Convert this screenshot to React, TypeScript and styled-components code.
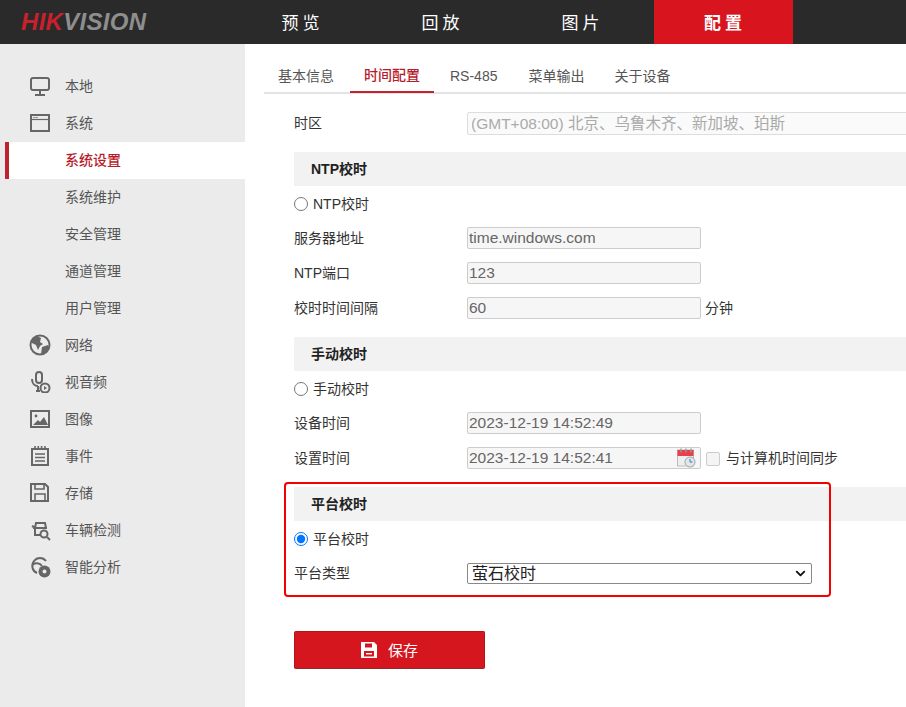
import styled, { createGlobalStyle } from 'styled-components';
import { ChevronDown } from 'lucide-react';

const GlobalStyle = createGlobalStyle`
  html, body {
    margin: 0;
    padding: 0;
    height: 100%;
    overflow: hidden;
    background: #fff;
    font-family: "Liberation Sans", "Noto Sans CJK SC", sans-serif;
  }
`;

const Page = styled.div`
  width: 906px;
  height: 707px;
  display: flex;
  flex-direction: column;
  overflow: hidden;
`;

const Header = styled.header`
  height: 44px;
  flex: none;
  display: flex;
  background: #2a2a2a;
`;

const Logo = styled.div`
  width: 231px;
  box-sizing: border-box;
  padding: 7px 0 0 21px;
  font-size: 24px;
  line-height: 30px;
  font-weight: 700;
  font-style: italic;
  letter-spacing: 0.3px;
  color: #8e8e8e;

  b {
    color: #c8202c;
  }
`;

const NavItem = styled.div<{ $active?: boolean }>`
  width: ${(p) => (p.$active ? '139px' : '140px')};
  margin-left: ${(p) => (p.$active ? '3px' : '0')};
  display: flex;
  align-items: center;
  justify-content: center;
  padding: 0 0 2px 3px;
  box-sizing: border-box;
  font-size: 17px;
  letter-spacing: 4px;
  color: #fff;
  font-weight: ${(p) => (p.$active ? 700 : 400)};
  background: ${(p) => (p.$active ? '#d8141e' : 'transparent')};
`;

const Body = styled.div`
  flex: 1;
  display: flex;
  min-height: 0;
`;

const Sidebar = styled.aside`
  width: 245px;
  flex: none;
  box-sizing: border-box;
  padding-top: 24px;
  background: #ebebeb;
`;

const MenuRow = styled.div<{ $selected?: boolean }>`
  height: 37px;
  display: flex;
  align-items: center;
  box-sizing: border-box;
  margin-left: ${(p) => (p.$selected ? '5px' : '0')};
  padding: 0 0 3px ${(p) => (p.$selected ? '56px' : '65px')};
  position: relative;
  font-size: 14px;
  color: ${(p) => (p.$selected ? '#b81c2c' : '#555')};
  font-weight: ${(p) => (p.$selected ? 500 : 400)};
  background: ${(p) => (p.$selected ? '#fff' : 'transparent')};
  border-left: ${(p) => (p.$selected ? '4px solid #c0202f' : 'none')};
`;

const MenuIcon = styled.svg`
  position: absolute;
  left: 29px;
  top: 7px;
  width: 22px;
  height: 22px;
  fill: none;
  stroke: #666;
  stroke-width: 2;
`;

const Main = styled.main`
  flex: 1;
  min-width: 0;
  margin-left: 19px;
`;

const Tabs = styled.nav`
  height: 48px;
  display: flex;
  align-items: flex-end;
  padding-left: 14px;
  border-bottom: 2px solid #e4e4e4;
`;

const Tab = styled.div<{ $active?: boolean; $gap: number }>`
  height: 33px;
  margin-right: ${(p) => p.$gap}px;
  padding: 0 ${(p) => (p.$active ? '14px' : '0')};
  margin-bottom: -1px;
  font-size: 14px;
  line-height: ${(p) => (p.$active ? '30px' : '32px')};
  color: ${(p) => (p.$active ? '#b81c2c' : '#555')};
  font-weight: ${(p) => (p.$active ? 500 : 400)};
  border-bottom: 2px solid ${(p) => (p.$active ? '#c8202c' : 'transparent')};
  box-sizing: border-box;
`;

const Content = styled.div`
  padding: 12px 0 0 30px;
`;

const Row = styled.div`
  height: 35px;
  display: flex;
  align-items: center;
  font-size: 14px;
  color: #333;
`;

const Label = styled.div`
  width: 173px;
  flex: none;
  padding-bottom: 4px;
`;

const Section = styled.div`
  height: 34px;
  margin-top: 11px;
  box-sizing: border-box;
  padding: 0 0 2px 17px;
  display: flex;
  align-items: center;
  background: #f2f2f2;
  font-size: 14px;
  font-weight: 700;
  color: #222;
`;

const RadioLabel = styled.label`
  display: flex;
  align-items: center;
  gap: 5px;
  padding-bottom: 2px;

  input {
    width: 14px;
    height: 14px;
    margin: 3px 0 0;
    accent-color: #0075ff;
  }
`;

const TextInput = styled.input`
  display: block;
  width: 234px;
  height: 22px;
  margin-bottom: 1px;
  box-sizing: border-box;
  padding: 0 1px;
  border: 1px solid #ccc;
  border-radius: 2px;
  background: #f6f6f6;
  font: 15.5px "Liberation Sans", "Noto Sans CJK SC", sans-serif;
  color: #666;
  outline: none;
`;

const Note = styled.span`
  margin-left: 4px;
  padding-bottom: 4px;
`;

const DateField = styled.div`
  position: relative;
  width: 234px;
  height: 23px;
`;

const CalendarIcon = styled.svg`
  position: absolute;
  right: 5px;
  top: 1px;
  width: 19px;
  height: 20px;
`;

const SyncCheck = styled.input`
  appearance: none;
  width: 14px;
  height: 14px;
  margin: 1px 2px 0 5px;
  border: 1px solid #ccc;
  border-radius: 2px;
  background: #f4f4f4;
`;

const ZoneSelect = styled.select`
  width: 480px;
  height: 23px;
  flex: none;
  padding: 0;
  text-indent: -1px;
  border: 1px solid #ddd;
  border-radius: 2px;
  background: #fafafa;
  opacity: 1;
  font: 15.5px "Liberation Sans", "Noto Sans CJK SC", sans-serif;
  color: #aaa;
`;

const SelectWrap = styled.div`
  position: relative;
  width: 345px;
  height: 21px;

  svg {
    position: absolute;
    right: 4px;
    top: 3px;
    pointer-events: none;
  }
`;

const PlatformSelect = styled.select`
  appearance: none;
  display: block;
  width: 100%;
  height: 21px;
  padding: 0 0 0 4px;
  border: 1px solid #888;
  border-radius: 2px;
  background: #fff;
  font: 16px "Liberation Sans", "Noto Sans CJK SC", sans-serif;
  color: #222;
`;

const Highlighted = styled.div`
  position: relative;
`;

const RedFrame = styled.div`
  position: absolute;
  left: -10px;
  top: -5px;
  width: 547px;
  height: 115px;
  box-sizing: border-box;
  border: 2px solid #f40000;
  border-radius: 4px;
  pointer-events: none;
`;

const SaveButton = styled.button`
  width: 191px;
  height: 38px;
  margin-top: 40px;
  display: flex;
  align-items: center;
  justify-content: center;
  gap: 11px;
  padding: 0 0 1px;
  background: #d5161f;
  border: 1px solid #b5121a;
  border-bottom-color: #8f2a30;
  border-radius: 2px;
  color: #fff;
  font: 15px "Liberation Sans", "Noto Sans CJK SC", sans-serif;
`;

const menu: { label: string; selected?: boolean; icon?: React.ReactNode }[] = [
  {
    label: '本地',
    icon: (
      <>
        <rect x="2" y="3" width="18" height="12" rx="2" />
        <path d="M11 15v4M6 20h10" />
      </>
    ),
  },
  {
    label: '系统',
    icon: (
      <>
        <rect x="2" y="3" width="18" height="16" />
        <path d="M2 7.5h18" strokeWidth="1.2" />
        <path d="M4 5.5h5" strokeWidth="1" stroke="#999" />
      </>
    ),
  },
  { label: '系统设置', selected: true },
  { label: '系统维护' },
  { label: '安全管理' },
  { label: '通道管理' },
  { label: '用户管理' },
  {
    label: '网络',
    icon: (
      <>
        <circle cx="11" cy="11" r="9.5" />
        <path
          d="M3 6l5-4 4 2-1 4 3 2-3 2-2 4-2-5-4-2zM13 13l6-2 1 3-5 6-3 0z"
          fill="#666"
          stroke="none"
        />
      </>
    ),
  },
  {
    label: '视音频',
    icon: (
      <>
        <rect x="7" y="1" width="6" height="11" rx="3" />
        <path d="M3 8c0 5 3 7 6 7M7 20h4M9 15v5" />
        <circle cx="16" cy="17" r="4.5" />
        <path d="M15 15l3 2-3 2z" fill="#666" stroke="none" />
      </>
    ),
  },
  {
    label: '图像',
    icon: (
      <>
        <rect x="2" y="3" width="18" height="16" />
        <circle cx="7" cy="8" r="1.4" fill="#666" stroke="none" />
        <path d="M4 17l5-5 2 2 4-5 4 8z" fill="#666" stroke="none" />
      </>
    ),
  },
  {
    label: '事件',
    icon: (
      <>
        <rect x="3" y="4" width="16" height="16" />
        <path d="M6 1v4M9.3 1v4M12.6 1v4M16 1v4M6 9h10M6 12.5h10M6 16h10" strokeWidth="1.6" />
      </>
    ),
  },
  {
    label: '存储',
    icon: (
      <>
        <path d="M2 2h14l3 3v14H2z" />
        <path d="M6 2v5h9V2M6 19v-7h10v7" strokeWidth="1.6" />
      </>
    ),
  },
  {
    label: '车辆检测',
    icon: (
      <>
        <path d="M6 9l1-5h9l1 5M4 9h14M6 9v7h5M3 7l2 1" />
        <circle cx="15" cy="15" r="3.5" />
        <path d="M18 18l3 3" />
      </>
    ),
  },
  {
    label: '智能分析',
    icon: (
      <>
        <path d="M8 17C3 15 2 9 5 5s9-4 12 0M3 9c3-3 8-2 10 1" />
        <circle cx="15.5" cy="15.5" r="6" fill="#666" stroke="none" />
        <circle cx="15.5" cy="15.5" r="2" fill="#ebebeb" stroke="none" />
      </>
    ),
  },
];

function App() {
  return (
    <Page>
      <GlobalStyle />
      <Header>
        <Logo>
          <b>HIK</b>VISION
        </Logo>
        <NavItem>预览</NavItem>
        <NavItem>回放</NavItem>
        <NavItem>图片</NavItem>
        <NavItem $active>配置</NavItem>
      </Header>
      <Body>
        <Sidebar>
          {menu.map((item) => (
            <MenuRow key={item.label} $selected={item.selected}>
              {item.icon && <MenuIcon viewBox="0 0 22 22">{item.icon}</MenuIcon>}
              {item.label}
            </MenuRow>
          ))}
        </Sidebar>
        <Main>
          <Tabs>
            <Tab $gap={16}>基本信息</Tab>
            <Tab $active $gap={16}>时间配置</Tab>
            <Tab $gap={31}>RS-485</Tab>
            <Tab $gap={30}>菜单输出</Tab>
            <Tab $gap={0}>关于设备</Tab>
          </Tabs>
          <Content>
            <Row>
              <Label>时区</Label>
              <ZoneSelect disabled>
                <option>(GMT+08:00) 北京、乌鲁木齐、新加坡、珀斯</option>
              </ZoneSelect>
            </Row>
            <Section>NTP校时</Section>
            <Row>
              <RadioLabel>
                <input type="radio" name="mode" />
                NTP校时
              </RadioLabel>
            </Row>
            <Row>
              <Label>服务器地址</Label>
              <TextInput defaultValue="time.windows.com" />
            </Row>
            <Row>
              <Label>NTP端口</Label>
              <TextInput defaultValue="123" />
            </Row>
            <Row>
              <Label>校时时间间隔</Label>
              <TextInput defaultValue="60" />
              <Note>分钟</Note>
            </Row>
            <Section>手动校时</Section>
            <Row>
              <RadioLabel>
                <input type="radio" name="mode" />
                手动校时
              </RadioLabel>
            </Row>
            <Row>
              <Label>设备时间</Label>
              <TextInput defaultValue="2023-12-19 14:52:49" />
            </Row>
            <Row>
              <Label>设置时间</Label>
              <DateField>
                <TextInput defaultValue="2023-12-19 14:52:41" />
                <CalendarIcon viewBox="0 0 19 20">
                  <rect x="0.5" y="2" width="16" height="16" fill="#eee" stroke="#bbb" />
                  <rect x="0.5" y="2" width="16" height="6" fill="#e8404a" />
                  <path d="M4 0.5v4M9 0.5v4M14 0.5v4" stroke="#999" strokeWidth="1.4" />
                  <circle cx="13" cy="14" r="5" fill="#e2e6ea" stroke="#9aa" />
                  <path d="M13 11v3h2.5" stroke="#47a" fill="none" />
                </CalendarIcon>
              </DateField>
              <SyncCheck type="checkbox" />
              <Note>与计算机时间同步</Note>
            </Row>
            <Highlighted>
              <Section>平台校时</Section>
              <Row>
                <RadioLabel>
                  <input type="radio" name="mode" defaultChecked />
                  平台校时
                </RadioLabel>
              </Row>
              <Row>
                <Label>平台类型</Label>
                <SelectWrap>
                  <PlatformSelect>
                    <option>萤石校时</option>
                  </PlatformSelect>
                  <ChevronDown size={15} strokeWidth={3} color="#111" />
                </SelectWrap>
              </Row>
              <RedFrame />
            </Highlighted>
            <SaveButton>
              <svg width="16" height="16" viewBox="0 0 16 16">
                <path
                  fill="#fff"
                  fillRule="evenodd"
                  d="M0 0h13l3 3v13H0zM4 1.5v4h7v-4zM3 9v5.5h10V9z"
                />
                <path fill="#fff" d="M5 11h6v1.4H5z" />
              </svg>
              保存
            </SaveButton>
          </Content>
        </Main>
      </Body>
    </Page>
  );
}

export default App;
